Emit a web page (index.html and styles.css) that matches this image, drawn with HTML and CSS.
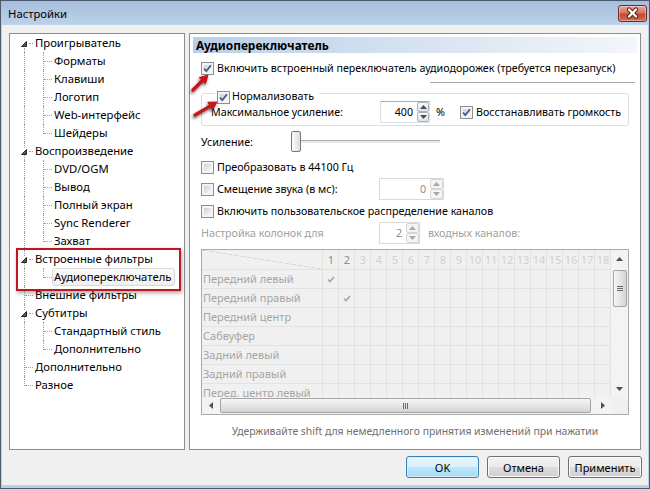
FILE: index.html
```html
<!DOCTYPE html>
<html lang="ru">
<head>
    <meta charset="UTF-8">
    <meta name="viewport" content="width=device-width, initial-scale=1.0">
    <title>Настройки</title>
    <link rel="stylesheet" href="styles.css">
</head>
<body>
<div class="window">
    <div class="titlebar">
        <span class="title">Настройки</span>
        <span class="close">
            <svg width="29" height="17" viewBox="0 0 29 17"><path d="M11 4.5l7 7M18 4.5l-7 7" stroke="#5b1d16" stroke-width="4.4" stroke-linecap="round"/><path d="M11 4.5l7 7M18 4.5l-7 7" stroke="#fff" stroke-width="2.4" stroke-linecap="round"/></svg>
        </span>
    </div>

    <div class="client">
        <div class="panes">
            <div class="tree">
                <div class="row"><span class="c v first h tri"><svg width="6" height="6"><path d="M5.5 .5V5.5H.5Z"/></svg></span><span class="lbl">Проигрыватель</span></div>
                <div class="row"><span class="c v"></span><span class="c v h"></span><span class="lbl">Форматы</span></div>
                <div class="row"><span class="c v"></span><span class="c v h"></span><span class="lbl">Клавиши</span></div>
                <div class="row"><span class="c v"></span><span class="c v h"></span><span class="lbl">Логотип</span></div>
                <div class="row"><span class="c v"></span><span class="c v h"></span><span class="lbl">Web-интерфейс</span></div>
                <div class="row"><span class="c v"></span><span class="c v h end"></span><span class="lbl">Шейдеры</span></div>
                <div class="row"><span class="c v h tri"><svg width="6" height="6"><path d="M5.5 .5V5.5H.5Z"/></svg></span><span class="lbl">Воспроизведение</span></div>
                <div class="row"><span class="c v"></span><span class="c v h"></span><span class="lbl">DVD/OGM</span></div>
                <div class="row"><span class="c v"></span><span class="c v h"></span><span class="lbl">Вывод</span></div>
                <div class="row"><span class="c v"></span><span class="c v h"></span><span class="lbl">Полный экран</span></div>
                <div class="row"><span class="c v"></span><span class="c v h"></span><span class="lbl">Sync Renderer</span></div>
                <div class="row"><span class="c v"></span><span class="c v h end"></span><span class="lbl">Захват</span></div>
                <div class="row"><span class="c v h tri"><svg width="6" height="6"><path d="M5.5 .5V5.5H.5Z"/></svg></span><span class="lbl">Встроенные фильтры</span></div>
                <div class="row"><span class="c v"></span><span class="c v h end"></span><span class="lbl selected">Аудиопереключатель</span></div>
                <div class="row"><span class="c v h"></span><span class="lbl">Внешние фильтры</span></div>
                <div class="row"><span class="c v h tri"><svg width="6" height="6"><path d="M5.5 .5V5.5H.5Z"/></svg></span><span class="lbl">Субтитры</span></div>
                <div class="row"><span class="c v"></span><span class="c v h"></span><span class="lbl">Стандартный стиль</span></div>
                <div class="row"><span class="c v"></span><span class="c v h end"></span><span class="lbl">Дополнительно</span></div>
                <div class="row"><span class="c v h"></span><span class="lbl">Дополнительно</span></div>
                <div class="row"><span class="c v h end"></span><span class="lbl">Разное</span></div>

                <div class="mark"></div>
            </div>

            <div class="page">
                <div class="page-head">Аудиопереключатель</div>

                <div class="opts">
                    <div class="chk-row"><span class="cb"><svg width="11" height="11"><path d="M2 5.5l2.3 2.6L9 2.3"/></svg></span>Включить встроенный переключатель аудиодорожек (требуется перезапуск)</div>
                    <div class="sep"></div>

                    <div class="group">
                        <div class="legend"><span class="cb"><svg width="11" height="11"><path d="M2 5.5l2.3 2.6L9 2.3"/></svg></span>Нормализовать</div>
                        <div class="gain-row">
                            <span class="gain-lbl">Максимальное усиление:</span>
                            <span class="spin">
                                <span class="val v400">400</span>
                                <span class="arr"><i><svg width="7" height="4"><path d="M3.5 0L7 4H0Z"/></svg></i><i><svg width="7" height="4"><path d="M0 0H7L3.5 4Z"/></svg></i></span>
                            </span>
                            <span class="pct">%</span>
                            <span class="cb restore"><svg width="11" height="11"><path d="M2 5.5l2.3 2.6L9 2.3"/></svg></span>
                            <span class="restore-lbl">Восстанавливать громкость</span>
                        </div>
                    </div>

                    <div class="slider-row">
                        <span class="slider-lbl">Усиление:</span>
                        <span class="thumb"></span>
                        <span class="track"></span>
                    </div>

                    <div class="chk-row gap6"><span class="cb off"></span>Преобразовать в 44100 Гц</div>

                    <div class="field-row">
                        <span class="field-lbl"><span class="cb off"></span>Смещение звука (в мс):</span>
                        <span class="spin disabled">
                            <span class="val v0">0</span>
                            <span class="arr wide"><i><svg width="7" height="4"><path d="M3.5 0L7 4H0Z"/></svg></i><i><svg width="7" height="4"><path d="M0 0H7L3.5 4Z"/></svg></i></span>
                        </span>
                    </div>

                    <div class="chk-row gap2"><span class="cb off"></span>Включить пользовательское распределение каналов</div>

                    <div class="field-row gap4 muted">
                        <span class="field-lbl">Настройка колонок для</span>
                        <span class="spin disabled">
                            <span class="val v2">2</span>
                            <span class="arr wide"><i><svg width="7" height="4"><path d="M3.5 0L7 4H0Z"/></svg></i><i><svg width="7" height="4"><path d="M0 0H7L3.5 4Z"/></svg></i></span>
                        </span>
                        <span class="after-lbl">входных каналов:</span>
                    </div>

                    <div class="grid">
                        <div class="tbl">
                            <div class="trow head">
                                <span class="rlbl diag"></span>
                                <span class="n dark">1</span><span class="n dark">2</span><span class="n">3</span><span class="n">4</span><span class="n">5</span><span class="n">6</span><span class="n">7</span><span class="n">8</span><span class="n">9</span><span class="n">10</span><span class="n">11</span><span class="n">12</span><span class="n">13</span><span class="n">14</span><span class="n">15</span><span class="n">16</span><span class="n">17</span><span class="n">18</span>
                            </div>
                            <div class="trow"><span class="rlbl">Передний левый</span><span class="cell"><svg width="8" height="7"><path d="M1 3.5l2 2.2L7 1"/></svg></span></div>
                            <div class="trow"><span class="rlbl">Передний правый</span><span class="cell"></span><span class="cell"><svg width="8" height="7"><path d="M1 3.5l2 2.2L7 1"/></svg></span></div>
                            <div class="trow"><span class="rlbl">Передний центр</span></div>
                            <div class="trow"><span class="rlbl">Сабвуфер</span></div>
                            <div class="trow"><span class="rlbl">Задний левый</span></div>
                            <div class="trow"><span class="rlbl">Задний правый</span></div>
                            <div class="trow"><span class="rlbl">Перед. центр левый</span></div>
                        </div>

                        <div class="vscroll">
                            <span class="sb-btn"><svg width="7" height="4"><path d="M3.5 0L7 4H0Z"/></svg></span>
                            <span class="vthumb"><svg width="6" height="5"><path d="M0 .5h6M0 2.5h6M0 4.5h6"/></svg></span>
                            <span class="sb-fill"></span>
                            <span class="sb-btn"><svg width="7" height="4"><path d="M0 0H7L3.5 4Z"/></svg></span>
                        </div>

                        <div class="hscroll">
                            <span class="sb-btn"><svg width="4" height="7"><path d="M4 0V7L0 3.5Z"/></svg></span>
                            <span class="hthumb"><svg width="5" height="6"><path d="M.5 0v6M2.5 0v6M4.5 0v6"/></svg></span>
                            <span class="sb-fill"></span>
                            <span class="sb-btn"><svg width="4" height="7"><path d="M0 0V7L4 3.5Z"/></svg></span>
                        </div>

                        <div class="corner"></div>
                    </div>

                    <div class="hint">Удерживайте shift для немедленного принятия изменений при нажатии</div>
                </div>

                <svg class="arrows" width="40" height="90" viewBox="0 0 40 90">
                    <path d="M3 56L13 46" stroke="#c8151c" stroke-width="3.2" stroke-linecap="round"/>
                    <path d="M18 41L15.5 49.8L9.2 43.5Z" fill="#c8151c" stroke="#c8151c" stroke-linejoin="round"/>
                    <path d="M5 81L20.5 71.8" stroke="#c8151c" stroke-width="3.2" stroke-linecap="round"/>
                    <path d="M27 68L22.4 76L17.8 68.2Z" fill="#c8151c" stroke="#c8151c" stroke-linejoin="round"/>
                </svg>
            </div>
        </div>

        <div class="buttons">
            <button class="btn default">OK</button>
            <button class="btn">Отмена</button>
            <button class="btn wide">Применить</button>
        </div>
    </div>
</div>
</body>
</html>
```

FILE: styles.css
```css
* { box-sizing: border-box; }

body {
    margin: 0;
    font-family: "Noto Sans", "DejaVu Sans", sans-serif;
    font-size: 11px;
    color: #000;
    background: #fff;
}

.window {
    width: 650px;
    height: 489px;
    border: 1px solid #4b5a6c;
    background: #b9d0e9;
    display: flex;
    flex-direction: column;
}

/* title bar */
.titlebar {
    height: 24px;
    display: flex;
    align-items: center;
    justify-content: space-between;
    padding: 0 2px 0 7px;
    background: linear-gradient(#a5bedc, #bcd2ea);
}

.title {
    font-size: 11.3px;
    margin-top: 1px;
}

.close {
    display: block;
    width: 29px;
    height: 17px;
    margin-top: 1px;
    border: 1px solid #6b2d25;
    border-radius: 3px;
    background: linear-gradient(#eaa99c 0%, #d6735f 45%, #c14a31 55%, #d66f52 100%);
    box-shadow: inset 0 0 0 1px rgba(255, 255, 255, 0.35);
}

.close svg { display: block; margin: -1px; }

.client {
    height: 460px;
    margin: 0 1px;
    background: #f0f0f0;
    padding: 8px 6px 0 7px;
}

.panes {
    display: flex;
    gap: 4px;
    height: 417px;
}

/* tree */
.tree {
    position: relative;
    width: 176px;
    border: 1px solid #8a8d93;
    background: #fff;
    padding-left: 4px;
    font-size: 11.3px;
}

.row {
    display: flex;
    height: 18px;
    align-items: center;
    white-space: nowrap;
}

.c {
    position: relative;
    flex: none;
    width: 19px;
    height: 18px;
}

.c.v::before {
    content: "";
    position: absolute;
    left: 10px;
    top: 0;
    bottom: 0;
    border-left: 1px dotted #a0a0a0;
}

.c.first::before { top: 14px; }
.c.end::before { bottom: 8px; }

.c.h::after {
    content: "";
    position: absolute;
    left: 11px;
    right: 0;
    top: 9px;
    border-top: 1px dotted #a0a0a0;
}

.c.tri::after { left: 15px; }

.c.tri svg {
    position: relative;
    display: block;
    margin: 7px 0 0 7px;
    background: #fff;
}

.c.tri path {
    fill: #575757;
    stroke: #262626;
}

.lbl {
    height: 18px;
    line-height: 16px;
    padding: 0 3px 0 1px;
    border: 1px solid transparent;
    border-radius: 3px;
}

.lbl.selected {
    border-color: #d9d9d9;
    background: linear-gradient(#fbfbfb, #f0f0f0);
}

.mark {
    position: absolute;
    left: 6px;
    top: 214px;
    width: 165px;
    height: 43px;
    border: 2px solid #c0161e;
    box-shadow: 1px 2px 4px rgba(0, 0, 0, 0.35);
}

/* right page */
.page {
    position: relative;
    width: 452px;
    border: 1px solid #8a8d93;
    background: #fff;
    padding: 3px;
    font-size: 10.7px;
}

.page-head {
    height: 16px;
    line-height: 16px;
    padding-left: 3px;
    font-weight: bold;
    font-size: 11.9px;
    background: linear-gradient(to right, #b9cfe8, #f3f6fa);
}

.opts {
    padding: 6px 0 0 8px;
}

.cb {
    flex: none;
    display: inline-block;
    width: 13px;
    height: 13px;
    border: 1px solid #8e8f8f;
    background: linear-gradient(135deg, #cdd1d6, #f8f8f8) 2px 2px / 7px 7px no-repeat, #f4f4f4;
}

.cb svg { display: block; }

.cb path {
    fill: none;
    stroke: #46598e;
    stroke-width: 1.8;
}

.chk-row {
    display: flex;
    align-items: center;
    gap: 3px;
    height: 18px;
    white-space: nowrap;
}

.gap6 { margin-top: 6px; }
.gap2 { margin-top: 2px; }
.gap4 { margin-top: 4px; }

.sep {
    height: 1px;
    margin: 5px 2px 0 229px;
    background: #a9a9a9;
}

.group {
    width: 428px;
    margin-top: 10px;
    border: 1px solid #d5dfe5;
    border-radius: 3px;
    padding-bottom: 2px;
}

.legend {
    display: flex;
    gap: 2px;
    align-items: center;
    width: max-content;
    height: 10px;
    margin: -3px 0 0 13px;
    padding: 0 5px 0 2px;
    background: #fff;
    line-height: 13px;
}

.legend .cb { align-self: flex-start; }

.gain-row {
    display: flex;
    align-items: center;
    height: 22px;
    padding-left: 9px;
    white-space: nowrap;
}

.gain-lbl { width: 169px; }

.spin {
    display: flex;
    height: 22px;
    border: 1px solid #dbdfe6;
    border-top-color: #abadb3;
    background: #fff;
}

.val {
    line-height: 20px;
    text-align: right;
    padding-right: 4px;
}

.v400 { width: 36px; }
.v0 { width: 50px; }
.v2 { width: 26px; }

.arr {
    display: flex;
    flex-direction: column;
    width: 12px;
}

.arr.wide { width: 13px; }

.arr i {
    flex: 1;
    display: flex;
    align-items: center;
    justify-content: center;
    border: 1px solid #a9b1bb;
    border-radius: 2px;
    background: linear-gradient(#f8fafc, #dfe5ec);
}

.arr i svg { display: block; }
.arr path { fill: #4d4d4d; }

.spin.disabled { border-color: #d9d9d9; }
.spin.disabled .val { color: #8d8d8d; }
.spin.disabled .arr i { border-color: #d6d6d6; background: #f4f4f4; }
.spin.disabled .arr path { fill: #a8a8a8; }

.pct { width: 10px; margin-left: 6px; }
.cb.restore { margin-left: 14px; }
.restore-lbl { margin-left: 3px; }

.slider-row {
    display: flex;
    align-items: center;
    height: 21px;
    margin-top: 5px;
}

.slider-lbl { width: 90px; }

.thumb {
    width: 10px;
    height: 21px;
    border: 1px solid #777;
    border-radius: 2px;
    background: linear-gradient(to right, #fdfdfd, #dedede);
}

.track {
    width: 139px;
    height: 3px;
    border-top: 1px solid #aeb0b0;
    background: #e6ecec;
}

.field-row {
    display: flex;
    align-items: center;
    height: 22px;
    margin-top: 2px;
    white-space: nowrap;
}

.field-lbl {
    display: flex;
    align-items: center;
    gap: 3px;
    width: 178px;
}

.muted { color: #a0a0a0; }
.after-lbl { margin-left: 8px; }

/* channel grid */
.grid {
    display: grid;
    grid-template-columns: 409px 17px;
    grid-template-rows: 147px 17px;
    width: 428px;
    height: 166px;
    margin-top: 5px;
    border: 1px solid #a9a9a9;
}

.tbl {
    overflow: hidden;
    background: #f0f0f0;
}

.trow {
    display: flex;
    height: 19px;
    border-bottom: 1px solid #e2e2e2;
    background: repeating-linear-gradient(to right, transparent 0 15px, #e2e2e2 15px 16px) 121px 0 / 288px 100% no-repeat;
}

.trow.head { height: 20px; }

.rlbl {
    flex: none;
    width: 121px;
    padding-left: 1px;
    line-height: 18px;
    font-size: 11px;
    color: #a5a5a5;
    border-right: 1px solid #e2e2e2;
    white-space: nowrap;
    overflow: hidden;
}

.rlbl.diag {
    background: linear-gradient(to top right, transparent calc(50% - 0.6px), #d2d2d2 50%, transparent calc(50% + 0.6px));
}

.n {
    width: 16px;
    line-height: 19px;
    font-size: 11px;
    text-align: center;
    color: #d0d0d0;
}

.n.dark { color: #8e8e8e; }

.cell {
    width: 16px;
    display: flex;
    align-items: center;
    justify-content: center;
}

.cell path {
    fill: none;
    stroke: #a2a2a2;
    stroke-width: 1.5;
}

.vscroll {
    display: flex;
    flex-direction: column;
    align-items: center;
    background: #f3f3f3;
}

.hscroll {
    display: flex;
    align-items: center;
    background: #f3f3f3;
}

.sb-btn {
    flex: none;
    width: 17px;
    height: 17px;
    display: flex;
    align-items: center;
    justify-content: center;
}

.sb-btn path { fill: #505050; }
.sb-fill { flex: 1; }

.vthumb {
    width: 14px;
    height: 37px;
    margin-top: 3px;
    display: flex;
    align-items: center;
    justify-content: center;
    border: 1px solid #a4a4a4;
    border-radius: 2px;
    background: linear-gradient(to right, #f7f7f7, #e2e2e2 60%, #d4d4d4);
}

.hthumb {
    width: 371px;
    height: 15px;
    margin-left: 1px;
    display: flex;
    align-items: center;
    justify-content: center;
    border: 1px solid #a4a4a4;
    border-radius: 2px;
    background: linear-gradient(#f7f7f7, #e2e2e2 60%, #d4d4d4);
}

.vthumb path, .hthumb path {
    stroke: #6a6a6a;
    fill: none;
}

.corner { background: #f0f0f0; }

.hint {
    width: 428px;
    margin-top: 8px;
    line-height: 16px;
    font-size: 10.4px;
    text-align: center;
    color: #6f6f6f;
}

.arrows {
    position: absolute;
    left: 0;
    top: 0;
    overflow: visible;
    filter: drop-shadow(-1px 2px 1.5px rgba(0, 0, 0, 0.55));
}

/* buttons */
.buttons {
    display: flex;
    justify-content: flex-end;
    gap: 8px;
    margin-top: 6px;
}

.btn {
    width: 73px;
    height: 22px;
    padding: 0;
    font-family: inherit;
    font-size: 11px;
    color: #000;
    border: 1px solid #707070;
    border-radius: 3px;
    background: linear-gradient(#f2f2f2 0%, #ebebeb 50%, #dddddd 50%, #cfcfcf 100%);
    box-shadow: inset 0 0 0 1px #fbfbfb;
}

.btn.wide { width: 74px; }

.btn.default {
    border-color: #3c7fb1;
    background: linear-gradient(#eaf6fd 0%, #d9f0fc 50%, #bee6fd 50%, #a7d9f5 100%);
    box-shadow: inset 0 0 0 1px #d5effc;
}
```
